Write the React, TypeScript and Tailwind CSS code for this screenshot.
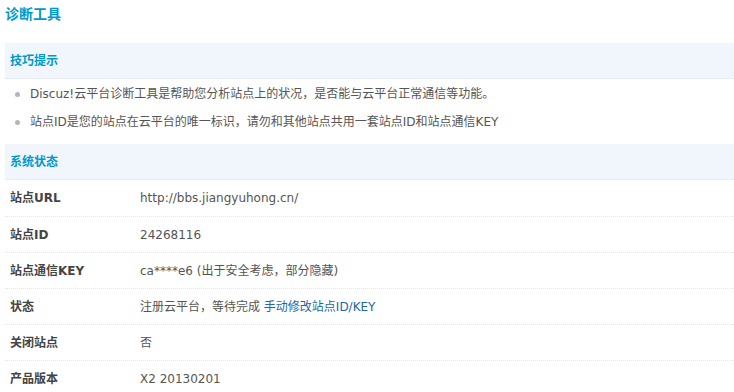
import React from 'react';

const rows: { label: string; value: React.ReactNode }[] = [
  { label: '站点URL', value: 'http://bbs.jiangyuhong.cn/' },
  { label: '站点ID', value: '24268116' },
  { label: '站点通信KEY', value: 'ca****e6 (出于安全考虑，部分隐藏)' },
  {
    label: '状态',
    value: (
      <>
        注册云平台，等待完成{' '}
        <a href="#" className="text-[#2366a8]">手动修改站点ID/KEY</a>
      </>
    ),
  },
  { label: '关闭站点', value: '否' },
  { label: '产品版本', value: 'X2 20130201' },
];

const tips = [
  'Discuz!云平台诊断工具是帮助您分析站点上的状况，是否能与云平台正常通信等功能。',
  '站点ID是您的站点在云平台的唯一标识，请勿和其他站点共用一套站点ID和站点通信KEY',
];

function SectionHeader({ title }: { title: string }) {
  return (
    <div className="h-[36px] flex items-center pl-[5px] bg-[#f0f6fc] border-b border-dotted border-[#dbe7f2]">
      <span className="font-bold text-[#0099cc] text-[12px]">{title}</span>
    </div>
  );
}

export default function App() {
  return (
    <div
      className="min-h-screen bg-white pl-[5px] text-[12px] text-[#555]"
      style={{ fontFamily: '"DejaVu Sans", "Noto Sans CJK SC", sans-serif' }}
    >
      <h3 className="h-[28px] flex items-center text-[14px] font-bold text-[#0099cc]">诊断工具</h3>
      <div className="mt-[15px]">
        <SectionHeader title="技巧提示" />
        <ul className="pt-[1px]">
          {tips.map(t => (
            <li key={t} className="h-[28px] flex items-center">
              <span className="w-[5px] h-[5px] rounded-full bg-[#b5b5b5] ml-[10px] mr-[10px]"></span>
              <span>{t}</span>
            </li>
          ))}
        </ul>
      </div>
      <div className="mt-[8px]">
        <SectionHeader title="系统状态" />
        {rows.map((r, i) => (
          <div
            key={r.label}
            className={`flex items-center h-[36px] ${i > 0 ? 'border-t border-dotted border-[#dbe7f2]' : ''}`}
          >
            <div className="w-[135px] pl-[5px] font-bold text-[#444]">{r.label}</div>
            <div>{r.value}</div>
          </div>
        ))}
      </div>
    </div>
  );
}
